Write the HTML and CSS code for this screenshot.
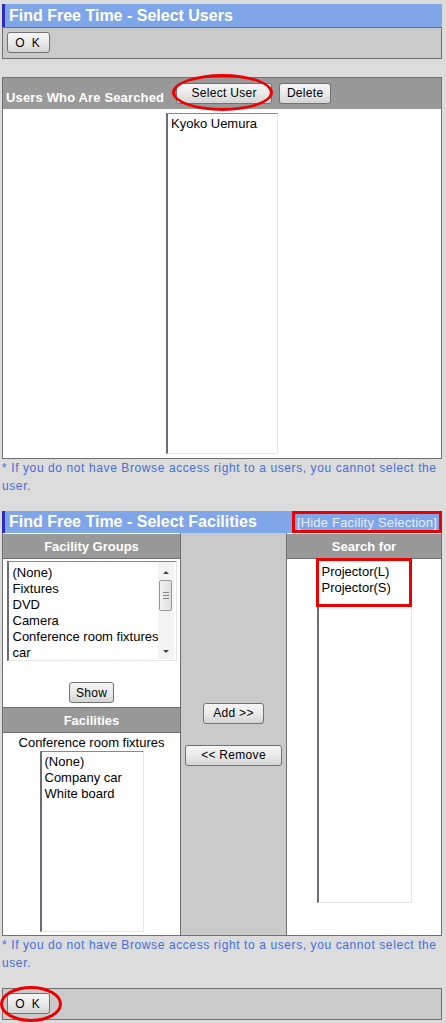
FILE: index.html
```html
<!DOCTYPE html>
<html lang="en">
<head>
    <meta charset="UTF-8">
    <title>Find Free Time</title>
    <link rel="stylesheet" href="styles.css">
</head>
<body>

    <!-- Selecao de usuarios -->
    <div class="title-bar">
        <h1>Find Free Time - Select Users</h1>
    </div>
    <div class="action-bar">
        <button class="btn btn-ok">O K</button>
    </div>

    <div class="panel">
        <div class="panel-head">
            <span class="panel-label">Users Who Are Searched</span>
            <span class="mark">
                <button class="btn btn-select">Select User</button>
                <span class="ring ring-select"></span>
            </span>
            <button class="btn btn-delete">Delete</button>
        </div>
        <div class="panel-body">
            <div class="listbox users-list">
                <div>Kyoko Uemura</div>
            </div>
        </div>
    </div>
    <p class="note">* If you do not have Browse access right to a users, you cannot select the user.</p>

    <!-- Selecao de instalacoes -->
    <div class="title-bar title-split">
        <h1>Find Free Time - Select Facilities</h1>
        <a class="hide-link" href="#">[Hide Facility Selection]</a>
    </div>
    <div class="facility-table">
        <div class="col col-left">
            <div class="col-head">Facility Groups</div>
            <div class="listbox group-list">
                <div class="group-items">
                    <div>(None)</div>
                    <div>Fixtures</div>
                    <div>DVD</div>
                    <div>Camera</div>
                    <div>Conference room fixtures</div>
                    <div>car</div>
                </div>
                <div class="scrollbar">
                    <span class="arrow arrow-up"></span>
                    <span class="thumb"><span class="grip"></span></span>
                    <span class="arrow arrow-down"></span>
                </div>
            </div>
            <div class="show-row">
                <button class="btn btn-show">Show</button>
            </div>
            <div class="col-head col-head-mid">Facilities</div>
            <div class="cur-group">Conference room fixtures</div>
            <div class="listbox fac-list">
                <div>(None)</div>
                <div>Company car</div>
                <div>White board</div>
            </div>
        </div>
        <div class="col col-mid">
            <button class="btn btn-add">Add &gt;&gt;</button>
            <button class="btn btn-remove">&lt;&lt; Remove</button>
        </div>
        <div class="col col-right">
            <div class="col-head">Search for</div>
            <div class="listbox search-list">
                <div>Projector(L)</div>
                <div>Projector(S)</div>
                <span class="box-mark"></span>
            </div>
        </div>
    </div>
    <p class="note">* If you do not have Browse access right to a users, you cannot select the user.</p>

    <div class="action-bar action-bottom">
        <span class="mark">
            <button class="btn btn-ok">O K</button>
            <span class="ring ring-ok"></span>
        </span>
    </div>

</body>
</html>
```

FILE: styles.css
```css
/* Pagina base */
body {
    margin: 0;
    padding: 4px 4px 0 2px;
    background-color: #dcdcdc;
    font-family: "Liberation Sans", Arial, sans-serif;
    font-size: 13px;
    color: #000;
}

/* Barra de titulo azul */
.title-bar {
    height: 23px;
    background-color: #7ea6e9;
    border-left: 3px solid #2c2cbf;
    display: flex;
    align-items: center;
}

.title-bar h1 {
    margin: 0 0 0 4px;
    font-size: 16px;
    font-weight: bold;
    color: #fff;
}

.title-split {
    height: 22px;
    justify-content: space-between;
}

.hide-link {
    align-self: stretch;
    display: flex;
    align-items: center;
    padding: 0 2px;
    border: 3px solid #ee0000;
    color: #e6eefc;
    font-size: 13px;
    text-decoration: none;
    letter-spacing: 0.2px;
}

/* Barra com o botao OK */
.action-bar {
    background-color: #cacaca;
    border: 1px solid #707070;
    padding: 4px 4px 5px;
    display: flex;
}

.action-bottom {
    margin-bottom: 4px;
}

/* Botoes */
.btn {
    font-family: "Liberation Sans", Arial, sans-serif;
    font-size: 12px;
    color: #000;
    height: 21px;
    padding: 0 6px;
    border: 1px solid #727272;
    border-radius: 3px;
    background: linear-gradient(#f6f6f6, #e8e8e8 55%, #d4d4d4);
    letter-spacing: 0.3px;
    cursor: pointer;
}

.btn-ok {
    width: 43px;
    letter-spacing: 2px;
}

.btn-select {
    width: 96px;
}

.btn-delete {
    width: 52px;
    margin-left: 7px;
}

.btn-show {
    width: 45px;
}

.btn-add {
    width: 61px;
}

.btn-remove {
    width: 97px;
}

/* Marcas vermelhas */
.mark {
    position: relative;
    display: inline-flex;
}

.ring {
    position: absolute;
    border: 3px solid #ee0000;
    border-radius: 50%;
    pointer-events: none;
}

.ring-select {
    top: -9px;
    bottom: -7px;
    left: -4px;
    right: -1px;
}

.ring-ok {
    top: -7px;
    bottom: -8px;
    left: -7px;
    right: -12px;
}

/* Painel de usuarios */
.panel {
    margin-top: 18px;
    border: 1px solid #707070;
}

.panel-head {
    height: 30px;
    background-color: #999;
    display: flex;
    align-items: center;
    padding: 0 0 1px 3px;
}

.panel-label {
    color: #fff;
    font-weight: bold;
    font-size: 13px;
    margin-top: 8px;
    margin-right: 12px;
    letter-spacing: 0.15px;
}

.panel-body {
    background-color: #fff;
    padding: 4px 0;
    display: flex;
    justify-content: center;
}

/* Listas */
.listbox {
    background-color: #fff;
    border-top: 1px solid #8a8a8a;
    border-left: 2px solid #6c6c78;
    border-right: 1px solid #e6e6e6;
    border-bottom: 1px solid #e6e6e6;
    box-sizing: border-box;
    padding: 2px 3px;
    line-height: 16px;
}

.users-list {
    width: 112px;
    height: 341px;
}

.note {
    margin: 0 0 16px;
    color: #4470d6;
    font-size: 12px;
    line-height: 18px;
    letter-spacing: 0.6px;
}

/* Tabela de instalacoes */
.facility-table {
    display: grid;
    grid-template-columns: 178px 106px 1fr;
    height: 403px;
    box-sizing: border-box;
    border: 1px solid #707070;
    border-top: none;
    background-color: #fff;
}

.col {
    display: flex;
    flex-direction: column;
    align-items: center;
}

.col-left {
    border-right: 1px solid #707070;
}

.col-mid {
    background-color: #cacaca;
    border-right: 1px solid #707070;
    justify-content: center;
    gap: 21px;
}

.col-head {
    align-self: stretch;
    height: 24px;
    margin-top: 1px;
    background-color: #999;
    border-bottom: 1px solid #707070;
    color: #fff;
    font-weight: bold;
    font-size: 13px;
    display: flex;
    align-items: center;
    justify-content: center;
}

.col-head-mid {
    border-top: 1px solid #707070;
    margin-top: 0;
}

.group-list {
    width: 170px;
    height: 100px;
    margin-top: 2px;
    padding: 3px 2px 0 4px;
    display: flex;
    justify-content: space-between;
}

.group-items {
    white-space: nowrap;
}

/* Barra de rolagem desenhada */
.scrollbar {
    width: 16px;
    margin-top: -3px;
    margin-bottom: 1px;
    background-color: #f3f3f3;
    display: flex;
    flex-direction: column;
    align-items: center;
}

.arrow {
    width: 0;
    height: 0;
    border-left: 3px solid transparent;
    border-right: 3px solid transparent;
    margin-top: 9px;
}

.arrow-up {
    border-bottom: 3px solid #444;
}

.arrow-down {
    border-top: 3px solid #444;
    margin-top: auto;
    margin-bottom: 6px;
}

.thumb {
    width: 13px;
    height: 31px;
    margin-top: 6px;
    box-sizing: border-box;
    border: 1px solid #9a9a9a;
    border-radius: 2px;
    background: linear-gradient(90deg, #f4f4f4, #dedede);
    display: flex;
    align-items: center;
    justify-content: center;
}

.grip {
    width: 6px;
    height: 5px;
    border-top: 1px solid #888;
    border-bottom: 1px solid #888;
    position: relative;
}

.grip::after {
    content: '';
    position: absolute;
    left: 0;
    right: 0;
    top: 2px;
    border-top: 1px solid #888;
}

.show-row {
    height: 46px;
    box-sizing: border-box;
    display: flex;
    align-items: flex-end;
    padding-bottom: 4px;
}

.cur-group {
    margin-top: 2px;
    line-height: 16px;
}

.fac-list {
    width: 104px;
    flex: 1;
    margin-bottom: 3px;
}

.search-list {
    position: relative;
    width: 95px;
    height: 343px;
    margin-top: 1px;
    padding-top: 3px;
}

.box-mark {
    position: absolute;
    top: -3px;
    left: -3px;
    width: 96px;
    height: 49px;
    box-sizing: border-box;
    border: 3px solid #ee0000;
}
```
